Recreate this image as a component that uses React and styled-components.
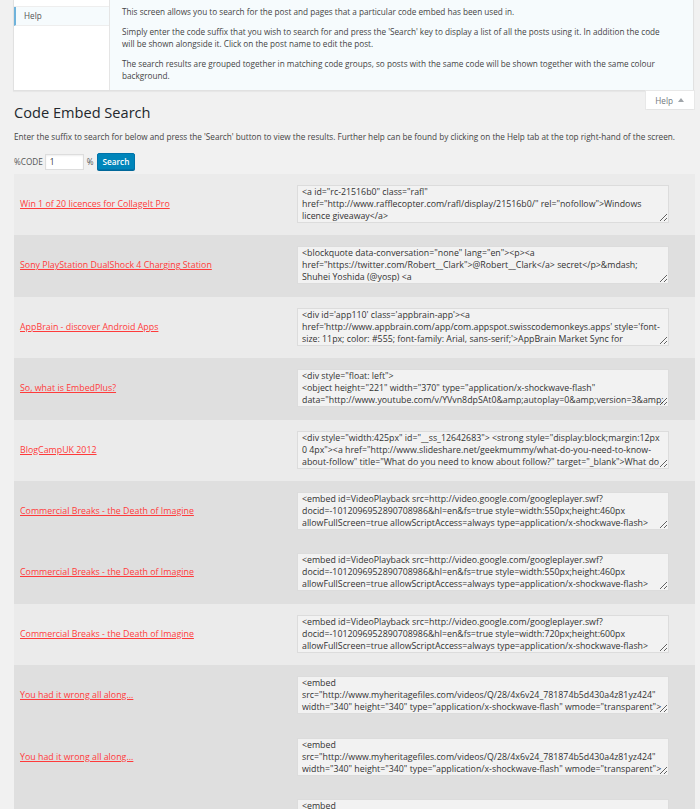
import styled, { createGlobalStyle } from "styled-components";

const GlobalStyle = createGlobalStyle`
  html, body {
    margin: 0;
    padding: 0;
    background: #f1f1f1;
  }
  body {
    font-family: "Open Sans", "Noto Sans", sans-serif;
    font-size: 8.2px;
    color: #444;
  }
`;

const HelpPanel = styled.div`
  display: flex;
  height: 91px;
  margin: 0 6px 0 13px;
  border: 1px solid #e1e1e1;
  border-top: none;
  box-sizing: border-box;
  box-shadow: 0 1px 1px rgba(0, 0, 0, 0.04);
`;

const HelpSidebar = styled.div`
  width: 95px;
  background: #fff;
  border-right: 1px solid #e5e5e5;
  display: flex;
  flex-direction: column;
`;

const TabStub = styled.div`
  height: 6px;
  border-bottom: 1px solid #eee;
`;

const HelpTab = styled.div`
  height: 18px;
  line-height: 18px;
  padding-left: 8px;
  background: #f6fbfd;
  border-left: 2px solid #6fb3db;
  border-bottom: 1px solid #eee;
  color: #555;
`;

const HelpContent = styled.div`
  flex: 1;
  background: #f6fbfd;
  padding: 6px 26px 0 12px;
  line-height: 12px;
  color: #444;

  p {
    margin: 0 0 8px;
  }
`;

const Main = styled.div`
  padding: 0 5px 0 14px;
`;

const MetaLink = styled.div`
  float: right;
  margin-right: 1px;
  height: 18px;
  padding: 0 10px 0 9px;
  background: #fff;
  box-shadow: 0 1px 1px -1px rgba(0, 0, 0, 0.1), 0 0 0 1px #e8e8e8;
  display: flex;
  align-items: center;
  gap: 5px;
  color: #72777c;
`;

const Arrow = styled.span`
  width: 0;
  height: 0;
  border-left: 3px solid transparent;
  border-right: 3px solid transparent;
  border-bottom: 4px solid #a0a5aa;
`;

const Title = styled.h1`
  margin: 0;
  padding-top: 11px;
  font-size: 14.6px;
  font-weight: 400;
  line-height: 20px;
  color: #23282d;
`;

const Intro = styled.p`
  margin: 9px 0 0;
  line-height: 12px;
`;

const Controls = styled.form`
  display: flex;
  align-items: center;
  height: 17px;
  margin-top: 10px;
  gap: 3px;
  color: #555;
`;

const CodeInput = styled.input`
  width: 39px;
  height: 16px;
  box-sizing: border-box;
  margin: 0 0 0 -1px;
  padding: 0 4px;
  border: 1px solid #ddd;
  box-shadow: inset 0 1px 2px rgba(0, 0, 0, 0.07);
  background: #fff;
  font-family: inherit;
  font-size: 8.2px;
  color: #32373c;
`;

const Button = styled.button`
  height: 17px;
  box-sizing: border-box;
  padding: 0 5px;
  background: #0085ba;
  border: 1px solid #0073aa;
  border-radius: 2px;
  box-shadow: 0 1px 0 #006799;
  color: #fff;
  font-family: inherit;
  font-size: 8.2px;
  font-weight: 600;
`;

const Results = styled.div`
  margin-top: 4px;
`;

const Row = styled.div`
  display: flex;
  align-items: center;
  padding: 11px 0 12.4px;
  background: ${(p) => (p.$dark ? "#dfdfdf" : "#ebebeb")};
`;

const PostCell = styled.div`
  width: 277px;
  box-sizing: border-box;
  padding-left: 6px;
  font-size: 8.85px;
`;

const PostLink = styled.a`
  color: #ff3b3b;
  text-decoration: underline;
  cursor: pointer;
`;

const CodeCell = styled.div`
  padding-left: 6px;
`;

const Code = styled.textarea`
  display: block;
  width: 372px;
  height: 38px;
  box-sizing: border-box;
  margin: 0;
  padding: 0 3px 0 4px;
  border: 1px solid #dcdcdc;
  background: #f2f2f2;
  color: #333;
  font-family: "Open Sans", "Noto Sans", sans-serif;
  font-size: 8.8px;
  line-height: 12px;
  overflow: hidden;
  resize: vertical;
`;

const google = (size) =>
  `<embed id=VideoPlayback src=http://video.google.com/googleplayer.swf?docid=-1012096952890708986&hl=en&fs=true style=${size} allowFullScreen=true allowScriptAccess=always type=application/x-shockwave-flash> </embed>`;

const heritage =
  '<embed\nsrc="http://www.myheritagefiles.com/videos/Q/28/4x6v24_781874b5d430a4z81yz424" width="340" height="340" type="application/x-shockwave-flash" wmode="transparent">\n</embed>';

const results = [
  {
    title: "Win 1 of 20 licences for CollageIt Pro",
    dark: false,
    code: '<a id="rc-21516b0" class="rafl" href="http://www.rafflecopter.com/rafl/display/21516b0/" rel="nofollow">Windows licence giveaway</a>\n<script src="//widget-prime.rafflecopter.com/launch.js"></script>',
  },
  {
    title: "Sony PlayStation DualShock 4 Charging Station",
    dark: true,
    code: '<blockquote data-conversation="none" lang="en"><p><a href="https://twitter.com/Robert__Clark">@Robert__Clark</a> secret</p>&mdash; Shuhei Yoshida (@yosp) <a href="https://twitter.com/yosp/status/428654385468092416">January 29, 2014</a></blockquote>',
  },
  {
    title: "AppBrain - discover Android Apps",
    dark: false,
    code: "<div id='app110' class='appbrain-app'><a href='http://www.appbrain.com/app/com.appspot.swisscodemonkeys.apps' style='font-size: 11px; color: #555; font-family: Arial, sans-serif;'>AppBrain Market Sync for Android</a></div>",
  },
  {
    title: "So, what is EmbedPlus?",
    dark: true,
    code: '<div style="float: left">\n<object height="221" width="370" type="application/x-shockwave-flash" data="http://www.youtube.com/v/YVvn8dpSAt0&amp;autoplay=0&amp;version=3&amp;showinfo=0">',
  },
  {
    title: "BlogCampUK 2012",
    dark: false,
    code: '<div style="width:425px" id="__ss_12642683"> <strong style="display:block;margin:12px 0 4px"><a href="http://www.slideshare.net/geekmummy/what-do-you-need-to-know-about-follow" title="What do you need to know about follow?" target="_blank">What do you need to know about follow?</a></strong>',
  },
  { title: "Commercial Breaks - the Death of Imagine", dark: true, code: google("width:550px;height:460px") },
  { title: "Commercial Breaks - the Death of Imagine", dark: true, code: google("width:550px;height:460px") },
  { title: "Commercial Breaks - the Death of Imagine", dark: false, code: google("width:720px;height:600px") },
  { title: "You had it wrong all along...", dark: true, code: heritage },
  { title: "You had it wrong all along...", dark: true, code: heritage },
  { title: "You had it wrong all along...", dark: true, code: heritage },
];

const App = () => {
  return (
    <>
      <GlobalStyle />
      <HelpPanel>
        <HelpSidebar>
          <TabStub />
          <HelpTab>Help</HelpTab>
        </HelpSidebar>
        <HelpContent>
          <p>
            This screen allows you to search for the post and pages that a particular code embed has been used in.
          </p>
          <p>
            Simply enter the code suffix that you wish to search for and press the 'Search' key to display a list of
            all the posts using it. In addition the code will be shown alongside it. Click on the post name to edit the
            post.
          </p>
          <p>
            The search results are grouped together in matching code groups, so posts with the same code will be shown
            together with the same colour background.
          </p>
        </HelpContent>
      </HelpPanel>
      <Main>
        <MetaLink>
          Help <Arrow />
        </MetaLink>
        <Title>Code Embed Search</Title>
        <Intro>
          Enter the suffix to search for below and press the 'Search' button to view the results. Further help can be
          found by clicking on the Help tab at the top right-hand of the screen.
        </Intro>
        <Controls onSubmit={(e) => e.preventDefault()}>
          %CODE
          <CodeInput defaultValue="1" />
          %
          <Button type="submit">Search</Button>
        </Controls>
        <Results>
          {results.map((r, i) => (
            <Row key={i} $dark={r.dark}>
              <PostCell>
                <PostLink>{r.title}</PostLink>
              </PostCell>
              <CodeCell>
                <Code readOnly value={r.code} />
              </CodeCell>
            </Row>
          ))}
        </Results>
      </Main>
    </>
  );
};

export default App;
